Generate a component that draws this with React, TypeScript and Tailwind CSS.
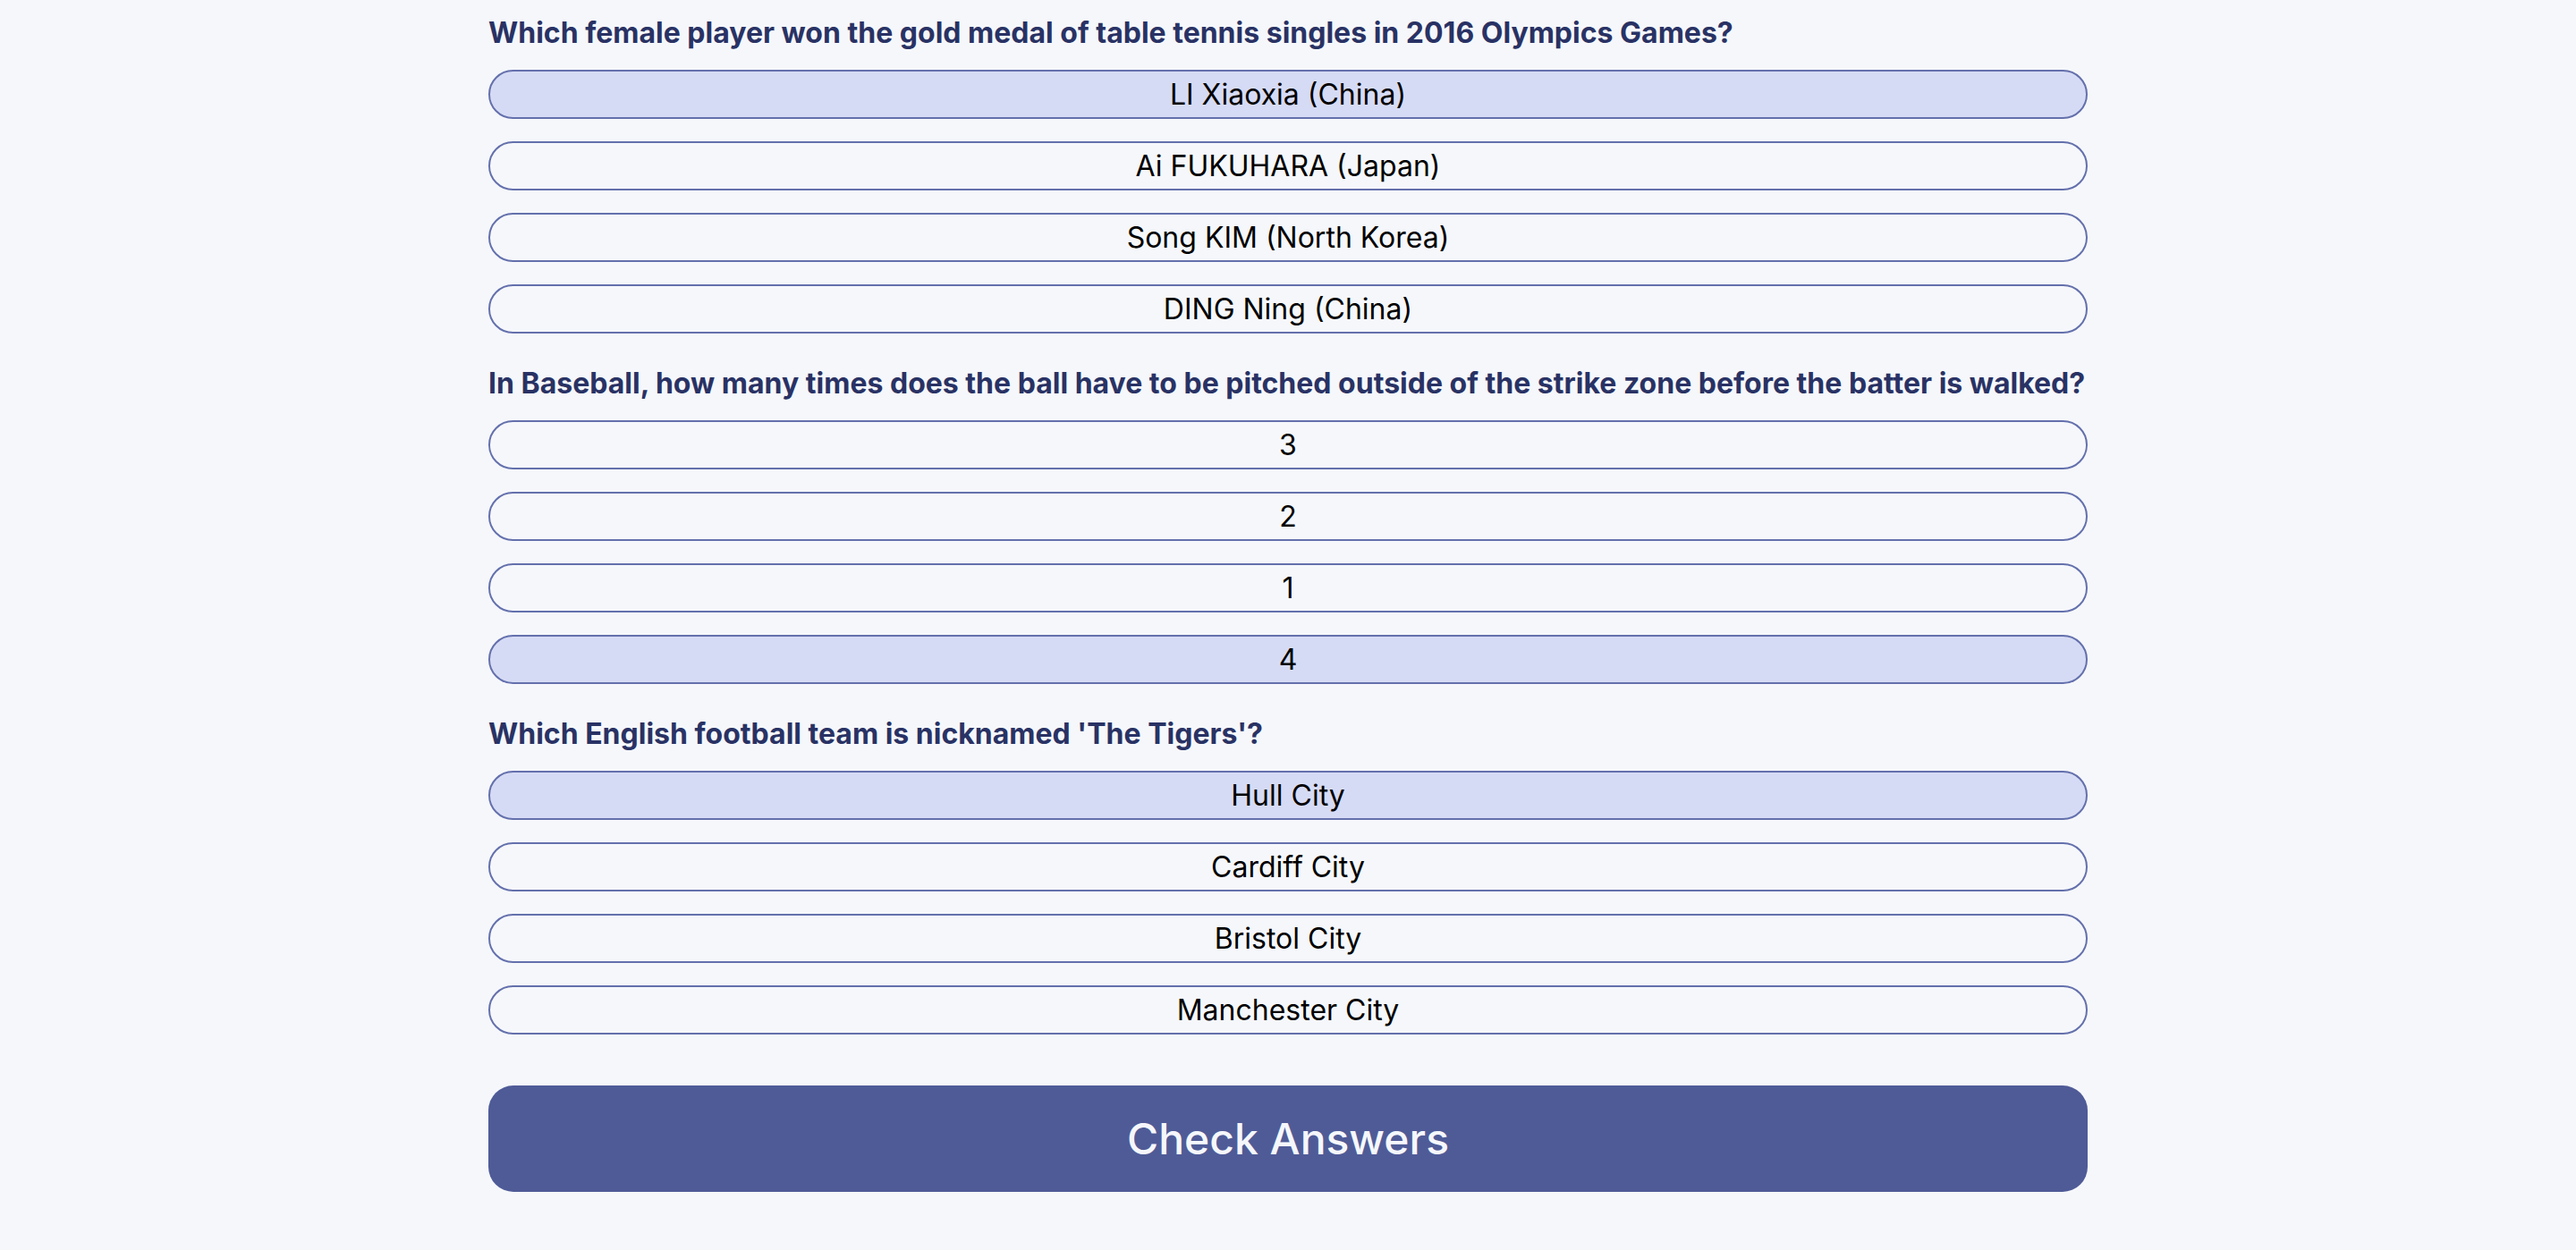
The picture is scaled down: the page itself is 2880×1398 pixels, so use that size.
import React, { useState } from 'react'

type Question = {
    question: string
    answers: string[]
    selected: number
}

const questions: Question[] = [
    {
        question: 'Which female player won the gold medal of table tennis singles in 2016 Olympics Games?',
        answers: ['LI Xiaoxia (China)', 'Ai FUKUHARA (Japan)', 'Song KIM (North Korea)', 'DING Ning (China)'],
        selected: 0,
    },
    {
        question: 'In Baseball, how many times does the ball have to be pitched outside of the strike zone before the batter is walked?',
        answers: ['3', '2', '1', '4'],
        selected: 3,
    },
    {
        question: "Which English football team is nicknamed 'The Tigers'?",
        answers: ['Hull City', 'Cardiff City', 'Bristol City', 'Manchester City'],
        selected: 0,
    },
]

const App = () => {
    const [picked, setPicked] = useState<number[]>(questions.map((q) => q.selected))

    return (
        <div className="min-h-screen bg-[#F5F7FB] font-['Inter',sans-serif]">
            <div className="mx-auto w-[1788px] pt-[13px] pb-[65px] flex flex-col gap-[32px]">
                {questions.map((q, qi) => (
                    <div key={qi} className="flex flex-col">
                        <h2 className="text-[32px] leading-[48px] font-bold text-[#293264] mb-[17px]">{q.question}</h2>
                        <div className="flex flex-col gap-[25px]">
                            {q.answers.map((a, ai) => (
                                <button
                                    key={ai}
                                    onClick={() => setPicked((p) => p.map((v, i) => (i === qi ? ai : v)))}
                                    className={`h-[55px] w-full rounded-full border-2 border-[#6470AC] flex items-center justify-center text-[32px] text-black cursor-pointer ${picked[qi] === ai ? 'bg-[#D6DBF5]' : 'bg-transparent'}`}
                                >
                                    {a}
                                </button>
                            ))}
                        </div>
                    </div>
                ))}
                <button className="mt-[25px] h-[119px] w-full rounded-[28px] bg-[#4F5B97] text-[#F5F7FB] text-[48px] font-medium cursor-pointer">
                    Check Answers
                </button>
            </div>
        </div>
    )
}

export default App
